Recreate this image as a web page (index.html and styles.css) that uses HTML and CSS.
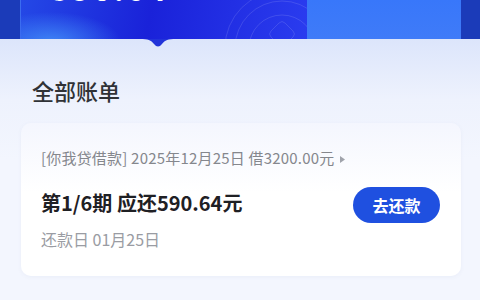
FILE: index.html
```html
<!DOCTYPE html>
<html lang="zh-CN">
<head>
  <meta charset="UTF-8">
  <meta name="viewport" content="width=device-width, initial-scale=1.0">
  <title>全部账单</title>
  <link rel="stylesheet" href="styles.css">
</head>
<body>
  <div class="banner">
    <div class="banner-main">
      <div class="amount">590.64</div>
      <svg class="rings" width="120" height="39" viewBox="0 0 120 39">
        <g fill="none" stroke="#ffffff" stroke-opacity="0.12" stroke-width="1">
          <circle cx="95" cy="48" r="33"/>
          <circle cx="95" cy="48" r="47"/>
          <circle cx="95" cy="48" r="57"/>
          <path d="M92 23 Q95 20 98 23 L106 31 Q109 34 106 37 L98 45 Q95 48 92 45 L84 37 Q81 34 84 31 Z"/>
        </g>
      </svg>
    </div>
    <div class="banner-side"></div>
    <svg class="pointer" width="36" height="10" viewBox="0 0 36 10">
      <path d="M0 0 C8 0 11 1 14 5 Q18 10 22 5 C25 1 28 0 36 0 Z" fill="#2233d9"/>
    </svg>
  </div>

  <div class="content">
    <h2 class="title">全部账单</h2>

    <div class="card">
      <p class="loan-info">
        [你我贷借款] 2025年12月25日 借3200.00元
        <svg class="arrow" width="5" height="7" viewBox="0 0 5 7"><path d="M0 0 L5 3.5 L0 7 Z" fill="#a0a3ab"/></svg>
      </p>
      <div class="bill-row">
        <span class="bill-amount">第1/6期 应还590.64元</span>
        <button class="pay-btn">去还款</button>
      </div>
      <p class="due-date">还款日 01月25日</p>
    </div>
  </div>
</body>
</html>
```

FILE: styles.css
```css
body {
  margin: 0;
  font-family: "Noto Sans CJK SC", "Noto Sans", sans-serif;
  background-color: #f3f6fe;
  background-image: linear-gradient(#dce5fb 39px, #eef2fd 100px, #f3f6fe 160px);
  background-repeat: no-repeat;
}
.banner {
  position: relative;
  display: flex;
  height: 39px;
  padding: 0 19px 0 20px;
  background: #1b3bb9;
}
.banner-main {
  position: relative;
  flex: 0 0 286px;
  overflow: hidden;
  border-left: 1px solid #3b6cf0;
  background:
    radial-gradient(ellipse 70px 30px at 30px 42px, rgba(70, 150, 250, 0.8), rgba(70, 150, 250, 0)),
    linear-gradient(100deg, #2448e6 0%, #1a22d9 45%, #2a3cef 100%);
}
.amount {
  margin-top: -30px;
  margin-left: 29px;
  font-size: 34px;
  line-height: 34px;
  font-weight: 700;
  color: #ffffff;
  letter-spacing: 1px;
}
.rings {
  position: absolute;
  right: 0;
  top: 0;
}
.banner-side {
  flex: 1;
  background: linear-gradient(#3877fa, #3f7bf8);
}
.pointer {
  position: absolute;
  left: 140px;
  top: 39px;
}
.content {
  padding: 0 19px 20px 21px;
}
.title {
  margin: 36px 0 0 0;
  padding-left: 11px;
  font-size: 22px;
  line-height: 30px;
  font-weight: 500;
  color: #303236;
}
.card {
  margin-top: 18px;
  padding: 24px 21px 26px 20px;
  border-radius: 10px;
  background: linear-gradient(#f4f6fe 0%, #ffffff 45%);
  box-shadow: 0 1px 4px rgba(80, 100, 160, 0.06);
}
.loan-info {
  margin: 0;
  font-size: 15px;
  line-height: 22px;
  letter-spacing: 0.2px;
  color: #85878d;
}
.arrow {
  margin-left: 2px;
  vertical-align: 1px;
}
.bill-row {
  display: flex;
  justify-content: space-between;
  align-items: center;
  margin-top: 18px;
}
.bill-amount {
  padding-bottom: 4px;
  font-size: 20px;
  line-height: 28px;
  font-weight: 700;
  color: #1f2024;
}
.pay-btn {
  width: 87px;
  height: 36px;
  border: 0;
  border-radius: 18px;
  background: #1f50e0;
  color: #ffffff;
  font-family: inherit;
  font-size: 16px;
  font-weight: 700;
  cursor: pointer;
}
.due-date {
  margin: 5px 0 0 0;
  font-size: 16px;
  line-height: 22px;
  color: #9a9ca3;
}
```
